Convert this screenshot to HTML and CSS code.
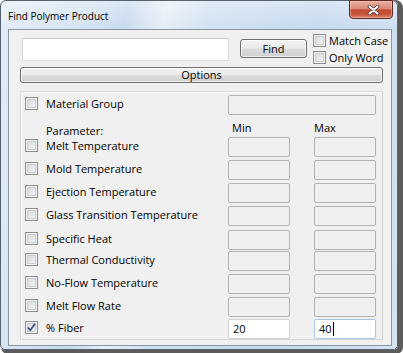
FILE: index.html
```html
<!DOCTYPE html>
<html>
<head>
<meta charset="utf-8">
<title>Find Polymer Product</title>
<link rel="stylesheet" href="styles.css">
</head>
<body>
<div class="window">
  <div class="titlebar">
    <span class="title">Find Polymer Product</span>
    <div class="close">
      <svg width="13" height="10" viewBox="0 0 13 10">
        <path d="M2.5 1.5 L10.5 8.5 M10.5 1.5 L2.5 8.5" stroke="#4a3a38" stroke-width="3.6" stroke-linecap="round" fill="none"/>
        <path d="M2.5 1.5 L10.5 8.5 M10.5 1.5 L2.5 8.5" stroke="#ffffff" stroke-width="2" stroke-linecap="round" fill="none"/>
      </svg>
    </div>
  </div>
  <div class="client">
    <div class="search-row">
      <div class="search"></div>
      <div class="btn find">Find</div>
      <div class="opts">
        <div class="opt"><span class="cb"></span><span>Match Case</span></div>
        <div class="opt"><span class="cb"></span><span>Only Word</span></div>
      </div>
    </div>
    <div class="btn options">Options</div>
    <div class="panel">
      <div class="row">
        <span class="cb"></span><span class="label">Material Group</span><span class="box box-wide"></span>
      </div>
      <div class="row-head">
        <span class="head-param">Parameter:</span><span class="head-min">Min</span><span class="head-max">Max</span>
      </div>
      <div class="row row-first">
        <span class="cb"></span><span class="label">Melt Temperature</span><span class="box"></span><span class="box box-max"></span>
      </div>
      <div class="row">
        <span class="cb"></span><span class="label">Mold Temperature</span><span class="box"></span><span class="box box-max"></span>
      </div>
      <div class="row">
        <span class="cb"></span><span class="label">Ejection Temperature</span><span class="box"></span><span class="box box-max"></span>
      </div>
      <div class="row">
        <span class="cb"></span><span class="label">Glass Transition Temperature</span><span class="box"></span><span class="box box-max"></span>
      </div>
      <div class="row row-loose">
        <span class="cb"></span><span class="label">Specific Heat</span><span class="box"></span><span class="box box-max"></span>
      </div>
      <div class="row row-tight">
        <span class="cb"></span><span class="label">Thermal Conductivity</span><span class="box"></span><span class="box box-max"></span>
      </div>
      <div class="row">
        <span class="cb"></span><span class="label">No-Flow Temperature</span><span class="box"></span><span class="box box-max"></span>
      </div>
      <div class="row">
        <span class="cb"></span><span class="label">Melt Flow Rate</span><span class="box"></span><span class="box box-max"></span>
      </div>
      <div class="row row-snug">
        <span class="cb cb-checked">
          <svg width="11" height="11" viewBox="0 0 11 11"><path d="M2 5.5 L4.3 8.3 L9 1.8" stroke="#3b4f86" stroke-width="1.7" fill="none" stroke-linejoin="round"/></svg>
        </span><span class="label">% Fiber</span><span class="box box-edit">20</span><span class="box box-max box-edit box-focus">40<span class="caret"></span></span>
      </div>
    </div>
  </div>
</div>
</body>
</html>
```
FILE: styles.css
```css
* { box-sizing: border-box; }
html, body { margin: 0; padding: 0; }
body {
  width: 403px;
  height: 353px;
  overflow: hidden;
  background: #ffffff;
  font-family: "Open Sans", "Noto Sans", sans-serif;
  font-size: 11px;
  line-height: 15px;
  color: #000;
}
.window {
  width: 398px;
  height: 350px;
  border: 1px solid #56636f;
  border-radius: 6px 6px 5px 5px;
  background:
    linear-gradient(to bottom, rgba(255,255,255,0.35), rgba(255,255,255,0) 30px),
    linear-gradient(100deg, #e3ecf6 0%, #d2e2f2 20%, #c6d9ee 28%, #e6eef7 36%, #d0e1f2 46%, #c4d8ee 70%, #d6e4f3 100%);
  display: flex;
  flex-direction: column;
  box-shadow: 3px 2px 0 2px #5c5c5c;
}
.titlebar {
  height: 28px;
  display: flex;
  justify-content: space-between;
  align-items: flex-start;
  padding: 0 4px 0 7px;
  flex: none;
}
.title {
  font-size: 10px;
  line-height: 14px;
  padding-top: 8px;
  color: #000;
}
.close {
  width: 44px;
  height: 19px;
  margin-top: -1px;
  border: 1px solid #5e2a20;
  border-radius: 0 0 4px 4px;
  background: linear-gradient(to bottom, #e8ad9f 0%, #da8c79 45%, #c3492f 52%, #c7553b 78%, #e08a72 100%);
  box-shadow: inset 0 0 0 1px rgba(255,210,200,0.45);
  display: flex;
  align-items: center;
  justify-content: center;
  padding-left: 4px;
}
.client {
  flex: none;
  height: 317px;
  margin: 0 5px 0 7px;
  border: 1px solid #8996a4;
  background: #f0f0f0;
}
.search-row {
  display: flex;
  align-items: flex-start;
  height: 30px;
  margin: 4px 0 0 13px;
}
.search {
  width: 207px;
  height: 23px;
  margin-top: 4px;
  background: #fff;
  border: 1px solid #dcdcdc;
  border-top-color: #c9c9c9;
  border-radius: 2px;
}
.btn {
  border: 1px solid #707070;
  border-radius: 3px;
  background: linear-gradient(to bottom, #f3f3f3 0%, #ebebeb 48%, #dddddd 52%, #cfcfcf 100%);
  box-shadow: inset 0 0 0 1px rgba(255,255,255,0.7);
  display: flex;
  align-items: center;
  justify-content: center;
  font-size: 11px;
  line-height: 14px;
}
.find {
  width: 67px;
  height: 19px;
  margin: 5px 0 0 11px;
}
.opts {
  display: flex;
  flex-direction: column;
  gap: 4px;
  margin-left: 6px;
}
.opt {
  display: flex;
  align-items: center;
  gap: 3px;
  height: 13px;
  line-height: 13px;
  white-space: nowrap;
}
.cb {
  flex: none;
  width: 13px;
  height: 13px;
  border: 1px solid #8e8f8f;
  background: linear-gradient(135deg, #d3d5d8 0%, #e6e7e9 50%, #f8f8f8 100%);
  box-shadow: inset 0 0 0 1px #f3f3f3, inset 0 0 0 2px #c9ccd0;
  display: flex;
  align-items: center;
  justify-content: center;
}
.cb-checked svg { display: block; }
.options {
  width: 363px;
  height: 16px;
  margin: 3px 0 0 11px;
}
.panel {
  width: 363px;
  height: 249px;
  margin: 8px 0 0 11px;
  border: 1px solid #d6d6d6;
  box-shadow: inset 1px 1px 0 #ffffff;
  padding: 3px 0 0 4px;
}
.row {
  display: flex;
  align-items: flex-start;
  height: 20px;
  margin-top: 3px;
}
.row:first-child { margin-top: 0; }
.row-first { margin-top: 0; }
.row-loose { margin-top: 4px; }
.row-tight { margin-top: 1px; }
.row-snug { margin-top: 2px; }
.row .cb { margin: 2px 8px 0 0; }
.label {
  width: 182px;
  padding-top: 1px;
  white-space: nowrap;
}
.box {
  flex: none;
  width: 62px;
  height: 20px;
  border: 1px solid #b3b3b3;
  border-radius: 2px;
  background: #f0f0f0;
}
.box-wide { width: 148px; }
.box-max { margin-left: 24px; }
.box-edit {
  background: #fff;
  border-color: #d2d2d2;
  padding: 1px 0 0 4px;
  display: flex;
  align-items: flex-start;
}
.box-focus { border-color: #a9c7e6; }
.caret {
  width: 1px;
  height: 14px;
  margin: 1px 0 0 1px;
  background: #000;
}
.row-head {
  display: flex;
  align-items: flex-start;
  height: 22px;
}
.head-param {
  width: 182px;
  margin-left: 21px;
  padding-top: 8px;
}
.head-min {
  width: 62px;
  padding: 5px 0 0 4px;
}
.head-max {
  margin-left: 24px;
  padding-top: 5px;
}
```
